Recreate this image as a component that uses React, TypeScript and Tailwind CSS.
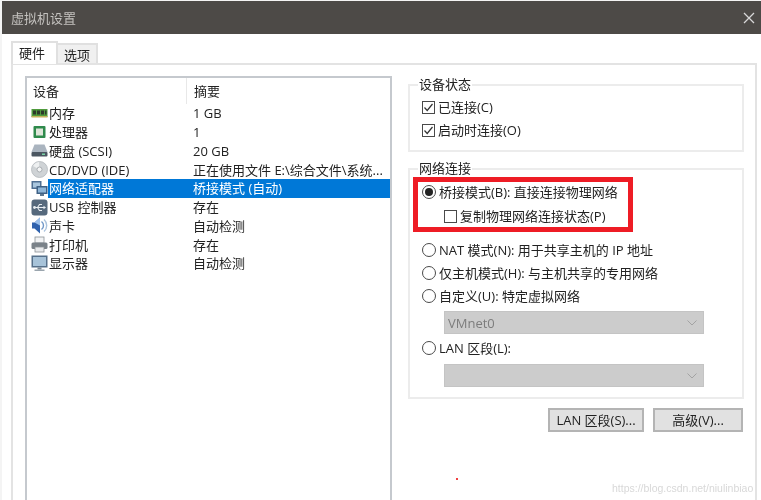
function RamIcon() {
  return (
    <svg width="17" height="17" viewBox="0 0 17 17" className="shrink-0">
      <rect x="0.5" y="4" width="16" height="8" fill="#4f9a3c" />
      <rect x="2" y="5.5" width="3" height="4" fill="#2c3a2a" />
      <rect x="6" y="5.5" width="3" height="4" fill="#2c3a2a" />
      <rect x="10" y="5.5" width="3" height="4" fill="#2c3a2a" />
      <rect x="14" y="5.5" width="1.5" height="4" fill="#2c3a2a" />
      <rect x="0.5" y="11" width="16" height="1.5" fill="#c3b25a" />
    </svg>
  );
}
function CpuIcon() {
  return (
    <svg width="17" height="17" viewBox="0 0 17 17" className="shrink-0">
      <rect x="2.5" y="2" width="12" height="12" rx="1" fill="#2f8a4c" />
      <rect x="5" y="4.5" width="7" height="7" fill="#dfe6da" />
    </svg>
  );
}
function DiskIcon() {
  return (
    <svg width="17" height="17" viewBox="0 0 17 17" className="shrink-0">
      <path d="M3.5 2.5h10L16.5 10H.5z" fill="#aab4bf" />
      <rect x="0.5" y="10" width="16" height="4.5" rx="1" fill="#4b5661" />
      <rect x="11" y="11.5" width="3" height="1.5" fill="#79d3a5" />
    </svg>
  );
}
function CdIcon() {
  return (
    <svg width="17" height="17" viewBox="0 0 17 17" className="shrink-0">
      <circle cx="8.5" cy="8.5" r="8" fill="#cfd3d6" stroke="#b3b8bc" strokeWidth="0.8" />
      <path d="M8.5 8.5 2 5a8 8 0 0 1 6-4z" fill="#eef0f1" />
      <circle cx="8.5" cy="8.5" r="2.5" fill="#f4f5f6" stroke="#9aa0a5" strokeWidth="0.8" />
    </svg>
  );
}
function NetIcon() {
  return (
    <svg width="17" height="17" viewBox="0 0 17 17" className="shrink-0">
      <rect x="0.5" y="1" width="10" height="8" fill="#4f6f92" />
      <rect x="2" y="2.5" width="7" height="5" fill="#a9c6de" />
      <rect x="5.5" y="6" width="11" height="8" fill="#3f6185" />
      <rect x="7" y="7.5" width="8" height="5" fill="#8fb5d6" />
      <rect x="9" y="14" width="4" height="2" fill="#5f7890" />
    </svg>
  );
}
function UsbIcon() {
  return (
    <svg width="17" height="17" viewBox="0 0 17 17" className="shrink-0">
      <rect x="0.5" y="0.5" width="16" height="16" rx="3" fill="#56697d" />
      <path d="M3 8.5h10M6.5 8.5l2-3h2.5M6.5 8.5l2 3h2.5" stroke="#e8edf2" strokeWidth="1.1" fill="none" />
      <path d="M12.5 6.8 15 8.5l-2.5 1.7z" fill="#e8edf2" />
      <circle cx="3.5" cy="8.5" r="1.4" fill="#e8edf2" />
    </svg>
  );
}
function SoundIcon() {
  return (
    <svg width="17" height="17" viewBox="0 0 17 17" className="shrink-0">
      <path d="M1 5.5h2.5L9 .5v16l-5.500-5H1z" fill="#2f62ad" />
      <path d="M3.500 5.500 9 .5v8z" fill="#9cc0ea" />
      <path d="M10.500 4.500a5 5 0 0 1 0 8" stroke="#6f97c8" strokeWidth="1.400" fill="none" />
      <path d="M13 2.500a8 8 0 0 1 0 12" stroke="#a9c2dd" strokeWidth="1.400" fill="none" />
    </svg>
  );
}
function PrinterIcon() {
  return (
    <svg width="17" height="17" viewBox="0 0 17 17" className="shrink-0">
      <rect x="4" y="1" width="9" height="6" fill="#f2f3f4" stroke="#8c9297" strokeWidth="0.8" />
      <rect x="0.5" y="6.5" width="16" height="6.5" rx="1.5" fill="#7a8289" />
      <rect x="4" y="11" width="9" height="5" fill="#e8eaec" stroke="#8c9297" strokeWidth="0.8" />
    </svg>
  );
}
function MonitorIcon() {
  return (
    <svg width="17" height="17" viewBox="0 0 17 17" className="shrink-0">
      <rect x="0.5" y="0.5" width="16" height="12" fill="#56708a" />
      <rect x="2" y="2" width="13" height="9" fill="#a7c3d9" />
      <rect x="6.5" y="12.500" width="4" height="2" fill="#7b8893" />
      <rect x="3.500" y="14.500" width="10" height="1.500" fill="#9aa5ae" />
    </svg>
  );
}

const rows = [
  { icon: <RamIcon />, name: "内存", value: "1 GB" },
  { icon: <CpuIcon />, name: "处理器", value: "1" },
  { icon: <DiskIcon />, name: "硬盘 (SCSI)", value: "20 GB" },
  { icon: <CdIcon />, name: "CD/DVD (IDE)", value: "正在使用文件 E:\\综合文件\\系统..." },
  { icon: <NetIcon />, name: "网络适配器", value: "桥接模式 (自动)", selected: true },
  { icon: <UsbIcon />, name: "USB 控制器", value: "存在" },
  { icon: <SoundIcon />, name: "声卡", value: "自动检测" },
  { icon: <PrinterIcon />, name: "打印机", value: "存在" },
  { icon: <MonitorIcon />, name: "显示器", value: "自动检测" },
];

function Check({ checked }: { checked?: boolean }) {
  return (
    <span className="w-[13px] h-[13px] border border-[#4a4a4a] bg-white shrink-0 flex items-center justify-center">
      {checked && (
        <svg width="11" height="11" viewBox="0 0 11 11">
          <path d="M1.500 5.500 4.200 8.500 9.500 2" stroke="#333" strokeWidth="1.200" fill="none" />
        </svg>
      )}
    </span>
  );
}
function Radio({ checked }: { checked?: boolean }) {
  return (
    <span className="w-[14px] h-[14px] rounded-full border border-[#4a4a4a] bg-white shrink-0 flex items-center justify-center">
      {checked && <span className="w-[8px] h-[8px] rounded-full bg-[#222]" />}
    </span>
  );
}
function Select({ value }: { value?: string }) {
  return (
    <div className="ml-[22px] w-[260px] h-[23px] bg-[#cccccc] border border-[#c4c4c4] flex items-center justify-between pl-[3px] pr-[5px] text-[#7d7d7d]">
      <span>{value}</span>
      <svg width="12" height="8" viewBox="0 0 12 8">
        <path d="M1.500 1.500 6 6l4.500-4.500" stroke="#a3a3a3" strokeWidth="1" fill="none" />
      </svg>
    </div>
  );
}
function Opt({ children, className }: { children: React.ReactNode; className?: string }) {
  return <div className={"flex items-center gap-[3px] h-[20px] whitespace-nowrap " + (className ?? "")}>{children}</div>;
}

export default function App() {
  return (
    <div
      className="relative w-[761px] h-[500px] overflow-hidden bg-[#f4f4f4] pl-[2px] pt-[1px] text-[13px] leading-[18px] text-[#222] blur-[0.35px]"
      style={{ fontFamily: '"Open Sans", "Noto Sans CJK SC", sans-serif' }}
    >
      <div className="h-[33px] bg-[#4d4a47] flex items-center justify-between pl-[9px] pr-[5px] text-[#c4c2bf]">
        <span>虚拟机设置</span>
        <svg width="14" height="14" viewBox="0 0 14 14">
          <path d="M2 2l10 10M12 2 2 12" stroke="#d8d8d8" strokeWidth="1.300" />
        </svg>
      </div>
      <div className="bg-white h-[470px] pl-[9px] pt-[7px] pr-[4px]">
        <div className="flex items-end h-[22px] relative z-10">
          <div className="h-[23px] w-[47px] -mb-[1px] bg-white border-2 border-b-0 border-[#e0e0e0] flex items-center pl-[6px] pb-[1px]">硬件</div>
          <div className="h-[20px] w-[40px] bg-[#f0f0f0] border-2 border-l-0 border-b-0 border-[#e0e0e0] flex items-center justify-center pt-[1px]">选项</div>
        </div>
        <div className="h-[440px] border-2 border-b-0 border-[#e3e3e3] flex pl-[12px] pt-[11px] pr-[10px]">
          <div className="w-[367px] h-[430px] border-2 border-b-0 border-[#c5c9ce] shrink-0">
            <div className="flex h-[26px]">
              <div className="w-[160px] pl-[6px] flex items-center border-r border-[#e8e8e8]">设备</div>
              <div className="pl-[7px] flex items-center">摘要</div>
            </div>
            <div className="flex flex-col">
              {rows.map((r) => (
                <div key={r.name} className="flex items-center h-[18.75px] pl-[4px]">
                  {r.icon}
                  <div className={"flex flex-1 h-full items-center " + (r.selected ? "bg-[#0078d7] text-white" : "")}>
                    <span className="w-[145px] pl-[1px] shrink-0 whitespace-nowrap">{r.name}</span>
                    <span className="whitespace-nowrap">{r.value}</span>
                  </div>
                </div>
              ))}
            </div>
          </div>
          <div className="flex flex-col ml-[16px] w-[336px] pt-[8px]">
            <div className="relative h-[68px] border-2 border-[#ececec] pl-[12px] pt-[11px] flex flex-col gap-[3px]">
              <span className="absolute left-[8px] -top-[11px] bg-white px-[1px]">设备状态</span>
              <Opt><Check checked />已连接(C)</Opt>
              <Opt><Check checked />启动时连接(O)</Opt>
            </div>
            <div className="relative mt-[16px] h-[231px] border-2 border-[#ececec] pl-[12px] pt-[12px] flex flex-col">
              <span className="absolute left-[8px] -top-[11px] bg-white px-[1px]">网络连接</span>
              <span className="absolute left-[3px] top-[7px] w-[220px] h-[55px] border-[5px] border-[#ee1c25]" />
              <Opt>
                <Radio checked />桥接模式(B): 直接连接物理网络
              </Opt>
              <Opt className="ml-[22px] mt-[4px]">
                <Check />复制物理网络连接状态(P)
              </Opt>
              <Opt className="mt-[14px]"><Radio />NAT 模式(N): 用于共享主机的 IP 地址</Opt>
              <Opt className="mt-[3px]"><Radio />仅主机模式(H): 与主机共享的专用网络</Opt>
              <Opt className="mt-[3px]"><Radio />自定义(U): 特定虚拟网络</Opt>
              <div className="mt-[5px]"><Select value="VMnet0" /></div>
              <Opt className="mt-[4px]"><Radio />LAN 区段(L):</Opt>
              <div className="mt-[6px]"><Select /></div>
            </div>
            <div className="flex justify-end gap-[9px] mt-[9px] pr-[1px]">
              <button className="w-[96px] h-[24px] bg-[#e1e1e1] border-2 border-[#b4b4b4]">LAN 区段(S)...</button>
              <button className="w-[90px] h-[24px] bg-[#e1e1e1] border-2 border-[#b4b4b4]">高级(V)...</button>
            </div>
          </div>
        </div>
      </div>
      <span className="absolute left-[612px] top-[479px] text-[10.5px] text-[#d8d8d8]" style={{ fontFamily: '"Liberation Sans", sans-serif' }}>
        https://blog.csdn.net/niulinbiao
      </span>
      <span className="absolute left-[456px] top-[478px] w-[2px] h-[2px] bg-[#f04040]" />
    </div>
  );
}
